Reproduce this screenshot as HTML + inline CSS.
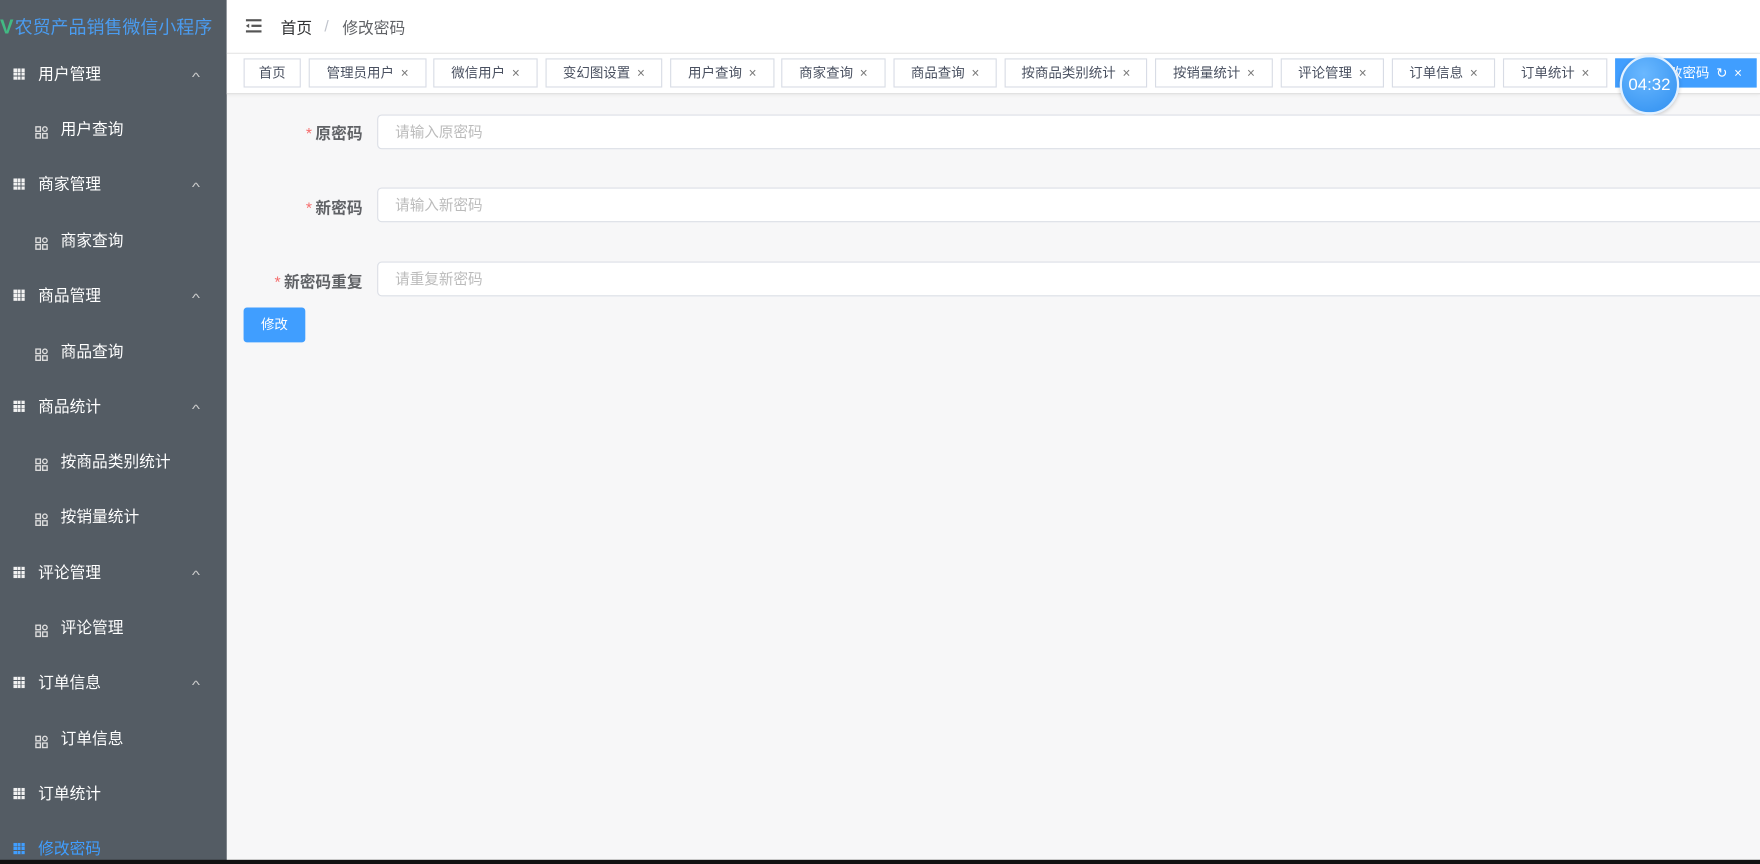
<!DOCTYPE html>
<html><head><meta charset="utf-8"><style>
*{margin:0;padding:0;box-sizing:border-box}
html,body{width:1760px;height:864px;overflow:hidden;background:#000}
#w{position:absolute;left:0;top:0;width:1568px;height:770px;transform:scale(1.12245);transform-origin:0 0;background:#f7f7f8;font-family:"Liberation Sans","Noto Sans CJK SC",sans-serif;overflow:hidden}
.sb{position:absolute;left:0;top:0;width:202px;height:770px;background:#545c64;color:#fff}
.logo{position:absolute;left:0;top:10px;height:28px;font-size:16px;color:#4a9cf0;white-space:nowrap;line-height:28px}
.logo b{color:#42b983;font-weight:bold;font-size:18px;margin-right:1px}
.it{position:absolute;left:0;width:202px;height:20px;font-size:14px;line-height:20px;white-space:nowrap}
.g{position:absolute;left:12px;top:5px;width:10px;height:10px;background:
linear-gradient(90deg,transparent 3px,#545c64 3px,#545c64 3.6px,transparent 3.6px,transparent 6.4px,#545c64 6.4px,#545c64 7px,transparent 7px),
linear-gradient(0deg,transparent 3px,#545c64 3px,#545c64 3.6px,transparent 3.6px,transparent 6.4px,#545c64 6.4px,#545c64 7px,transparent 7px),#f2f2f2}
.it .t{position:absolute;left:34px}
.s .t{left:54px}
.s i{position:absolute;left:31px;top:4px;width:12px;height:12px}
.car{position:absolute;left:172px;top:3px;font-size:11px;color:#ccc;transform:scaleX(1.4)}
.hd{position:absolute;left:202px;top:0;right:0;height:48px;background:#fff;border-bottom:1px solid #e6e6e6}
.tb{position:absolute;left:202px;top:48px;right:0;height:36px;background:#fff;border-bottom:1px solid #ddd;box-shadow:0 1px 3px rgba(0,0,0,.05)}
.tab{position:absolute;top:4px;height:26px;border:1px solid #d8dce5;background:#fff;font-size:12px;color:#495060;line-height:24px;text-align:center;white-space:nowrap}
.tab span{margin-left:6px;color:#777}
.tab.a{background:#409eff;border-color:#409eff;color:#fff}
.tab.a span{color:#fff}
.lab{position:absolute;font-size:14px;font-weight:bold;color:#606266;text-align:right;right:1245px}
.lab em{color:#f56c6c;font-style:normal;font-weight:normal;margin-right:3px}
.inp{position:absolute;left:336px;width:1240px;height:31px;background:#fff;border:1px solid #dcdfe6;border-radius:4px;font-size:13px;color:#bbb;line-height:29px;padding-left:15px}
</style></head><body><div id="w">
<div class="sb">
<div class="logo"><b>V</b>农贸产品销售微信小程序</div>
<div class="it" style="top:56px"><span class="g"></span><span class="t">用户管理</span><span class="car">^</span></div>
<div class="it s" style="top:105px"><i><svg width="12" height="12" viewBox="0 0 12 12" fill="none" stroke="#ddd" stroke-width="1.2"><rect x="1" y="1" width="4" height="4"/><rect x="7" y="1" width="4" height="4" rx="2"/><rect x="1" y="7" width="4" height="4"/><rect x="7" y="7" width="4" height="4"/></svg></i><span class="t">用户查询</span></div>
<div class="it" style="top:154px"><span class="g"></span><span class="t">商家管理</span><span class="car">^</span></div>
<div class="it s" style="top:204px"><i><svg width="12" height="12" viewBox="0 0 12 12" fill="none" stroke="#ddd" stroke-width="1.2"><rect x="1" y="1" width="4" height="4"/><rect x="7" y="1" width="4" height="4" rx="2"/><rect x="1" y="7" width="4" height="4"/><rect x="7" y="7" width="4" height="4"/></svg></i><span class="t">商家查询</span></div>
<div class="it" style="top:253px"><span class="g"></span><span class="t">商品管理</span><span class="car">^</span></div>
<div class="it s" style="top:303px"><i><svg width="12" height="12" viewBox="0 0 12 12" fill="none" stroke="#ddd" stroke-width="1.2"><rect x="1" y="1" width="4" height="4"/><rect x="7" y="1" width="4" height="4" rx="2"/><rect x="1" y="7" width="4" height="4"/><rect x="7" y="7" width="4" height="4"/></svg></i><span class="t">商品查询</span></div>
<div class="it" style="top:352px"><span class="g"></span><span class="t">商品统计</span><span class="car">^</span></div>
<div class="it s" style="top:401px"><i><svg width="12" height="12" viewBox="0 0 12 12" fill="none" stroke="#ddd" stroke-width="1.2"><rect x="1" y="1" width="4" height="4"/><rect x="7" y="1" width="4" height="4" rx="2"/><rect x="1" y="7" width="4" height="4"/><rect x="7" y="7" width="4" height="4"/></svg></i><span class="t">按商品类别统计</span></div>
<div class="it s" style="top:450px"><i><svg width="12" height="12" viewBox="0 0 12 12" fill="none" stroke="#ddd" stroke-width="1.2"><rect x="1" y="1" width="4" height="4"/><rect x="7" y="1" width="4" height="4" rx="2"/><rect x="1" y="7" width="4" height="4"/><rect x="7" y="7" width="4" height="4"/></svg></i><span class="t">按销量统计</span></div>
<div class="it" style="top:500px"><span class="g"></span><span class="t">评论管理</span><span class="car">^</span></div>
<div class="it s" style="top:549px"><i><svg width="12" height="12" viewBox="0 0 12 12" fill="none" stroke="#ddd" stroke-width="1.2"><rect x="1" y="1" width="4" height="4"/><rect x="7" y="1" width="4" height="4" rx="2"/><rect x="1" y="7" width="4" height="4"/><rect x="7" y="7" width="4" height="4"/></svg></i><span class="t">评论管理</span></div>
<div class="it" style="top:598px"><span class="g"></span><span class="t">订单信息</span><span class="car">^</span></div>
<div class="it s" style="top:648px"><i><svg width="12" height="12" viewBox="0 0 12 12" fill="none" stroke="#ddd" stroke-width="1.2"><rect x="1" y="1" width="4" height="4"/><rect x="7" y="1" width="4" height="4" rx="2"/><rect x="1" y="7" width="4" height="4"/><rect x="7" y="7" width="4" height="4"/></svg></i><span class="t">订单信息</span></div>
<div class="it" style="top:697px"><span class="g"></span><span class="t">订单统计</span></div>
<div class="it" style="top:746px;color:#409eff"><span class="g" style="background:linear-gradient(90deg,transparent 3px,#545c64 3px,#545c64 3.6px,transparent 3.6px,transparent 6.4px,#545c64 6.4px,#545c64 7px,transparent 7px),linear-gradient(0deg,transparent 3px,#545c64 3px,#545c64 3.6px,transparent 3.6px,transparent 6.4px,#545c64 6.4px,#545c64 7px,transparent 7px),#409eff"></span><span class="t">修改密码</span></div>
</div>
<div class="hd">
<svg style="position:absolute;left:17px;top:17px" width="14" height="12" viewBox="0 0 14 12"><rect x="0" y="0" width="14" height="2" fill="#555"/><rect x="5" y="5" width="9" height="2" fill="#555"/><rect x="0" y="10" width="14" height="2" fill="#555"/><path d="M0 6 L3 4 L3 8Z" fill="#555"/></svg>
<span style="position:absolute;left:48px;top:15px;font-size:14px;color:#303133">首页</span>
<span style="position:absolute;left:87px;top:15px;font-size:14px;color:#c0c4cc">/</span>
<span style="position:absolute;left:103px;top:15px;font-size:14px;color:#606266">修改密码</span>
</div>
<div class="tb">
<div class="tab" style="left:15px;width:51px">首页</div>
<div class="tab" style="left:73px;width:105px">管理员用户<span>×</span></div>
<div class="tab" style="left:184px;width:93px">微信用户<span>×</span></div>
<div class="tab" style="left:284px;width:104px">变幻图设置<span>×</span></div>
<div class="tab" style="left:395px;width:93px">用户查询<span>×</span></div>
<div class="tab" style="left:494px;width:93px">商家查询<span>×</span></div>
<div class="tab" style="left:594px;width:92px">商品查询<span>×</span></div>
<div class="tab" style="left:693px;width:127px">按商品类别统计<span>×</span></div>
<div class="tab" style="left:827px;width:105px">按销量统计<span>×</span></div>
<div class="tab" style="left:939px;width:92px">评论管理<span>×</span></div>
<div class="tab" style="left:1038px;width:92px">订单信息<span>×</span></div>
<div class="tab" style="left:1137px;width:93px">订单统计<span>×</span></div>
<div class="tab a" style="left:1237px;width:126px;text-align:right;padding-right:12px">修改密码<span>↻</span><span>×</span></div>
</div>
<div style="position:absolute;left:1443px;top:49px;width:53px;height:53px;border-radius:50%;background:radial-gradient(circle at 40% 30%,#6ab8ff,#2f8ff0);border:2px solid #e3f1ff;box-shadow:0 1px 4px rgba(0,0,0,.2);color:#fff;font-size:15px;text-align:center;line-height:49px">04:32</div>
<div class="lab" style="top:109px"><em>*</em>原密码</div>
<div class="inp" style="top:102px">请输入原密码</div>
<div class="lab" style="top:175px"><em>*</em>新密码</div>
<div class="inp" style="top:167px">请输入新密码</div>
<div class="lab" style="top:241px"><em>*</em>新密码重复</div>
<div class="inp" style="top:233px">请重复新密码</div>
<div style="position:absolute;left:217px;top:274px;width:55px;height:31px;background:#409eff;border-radius:3px;color:#fff;font-size:12px;text-align:center;line-height:31px">修改</div>
<div style="position:absolute;left:0;top:766px;width:1568px;height:4px;background:#111"></div>
</div></body></html>
